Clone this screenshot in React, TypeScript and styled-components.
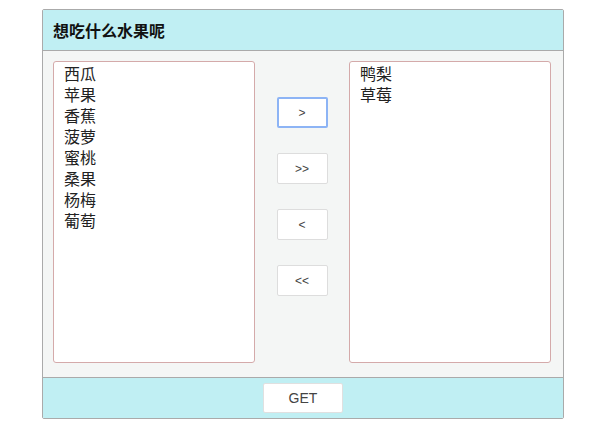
import React from "react";
import styled, { createGlobalStyle } from "styled-components";

const GlobalStyle = createGlobalStyle`
  body {
    margin: 0;
    background-color: #ffffff;
    font-family: "Liberation Sans", "Noto Sans CJK SC", sans-serif;
  }
`;

const Panel = styled.div`
  width: 520px;
  margin: 9px 0 0 42px;
  border: 1px solid #aaaaaa;
  border-radius: 2px;
  overflow: hidden;
`;

const Header = styled.div`
  height: 40px;
  display: flex;
  align-items: center;
  padding: 0 10px;
  background-color: #c0eff3;
  border-bottom: 1px solid #aaaaaa;
`;

const Title = styled.h1`
  margin: 0;
  font-size: 16px;
  font-weight: bold;
  color: #111;
  font-family: "Noto Sans CJK SC", sans-serif;
`;

const Body = styled.div`
  display: flex;
  justify-content: space-between;
  padding: 10px 12px 14px 10px;
  background-color: #f4f6f5;
  border-bottom: 1px solid #aaaaaa;
`;

const List = styled.div`
  width: 200px;
  height: 298px;
  box-sizing: content-box;
  padding: 1px 0;
  background: #ffffff;
  border: 1px solid #d4aaaa;
  border-radius: 3px;
  display: flex;
  flex-direction: column;
`;

const Item = styled.div`
  padding-left: 10px;
  font-size: 16px;
  line-height: 21px;
  color: #222;
  font-family: "Noto Sans CJK SC", sans-serif;
`;

const Controls = styled.div`
  display: flex;
  flex-direction: column;
  align-items: center;
  gap: 25px;
  padding-top: 36px;
`;

const MoveButton = styled.button<{ $focused?: boolean }>`
  width: 51px;
  height: 31px;
  padding: 0;
  background: #ffffff;
  border: ${(p) => (p.$focused ? "2px solid #8db4f5" : "1px solid #dddddd")};
  border-radius: 2px;
  color: #444;
  font-size: 12px;
  font-family: "Liberation Sans", sans-serif;
  cursor: pointer;
`;

const Footer = styled.div`
  height: 40px;
  display: flex;
  align-items: center;
  justify-content: center;
  background-color: #c0eff3;
`;

const GetButton = styled.button`
  width: 80px;
  height: 30px;
  background: #ffffff;
  border: 1px solid #e0e0e0;
  border-radius: 2px;
  color: #444;
  font-size: 14px;
  font-family: "Liberation Sans", sans-serif;
`;

const left = ["西瓜", "苹果", "香蕉", "菠萝", "蜜桃", "桑果", "杨梅", "葡萄"];
const right = ["鸭梨", "草莓"];

function App() {
  return (
    <>
      <GlobalStyle />
      <Panel>
        <Header>
          <Title>想吃什么水果呢</Title>
        </Header>
        <Body>
          <List>
            {left.map((f) => (
              <Item key={f}>{f}</Item>
            ))}
          </List>
          <Controls>
            <MoveButton $focused>&gt;</MoveButton>
            <MoveButton>&gt;&gt;</MoveButton>
            <MoveButton>&lt;</MoveButton>
            <MoveButton>&lt;&lt;</MoveButton>
          </Controls>
          <List>
            {right.map((f) => (
              <Item key={f}>{f}</Item>
            ))}
          </List>
        </Body>
        <Footer>
          <GetButton>GET</GetButton>
        </Footer>
      </Panel>
    </>
  );
}

export default App;
